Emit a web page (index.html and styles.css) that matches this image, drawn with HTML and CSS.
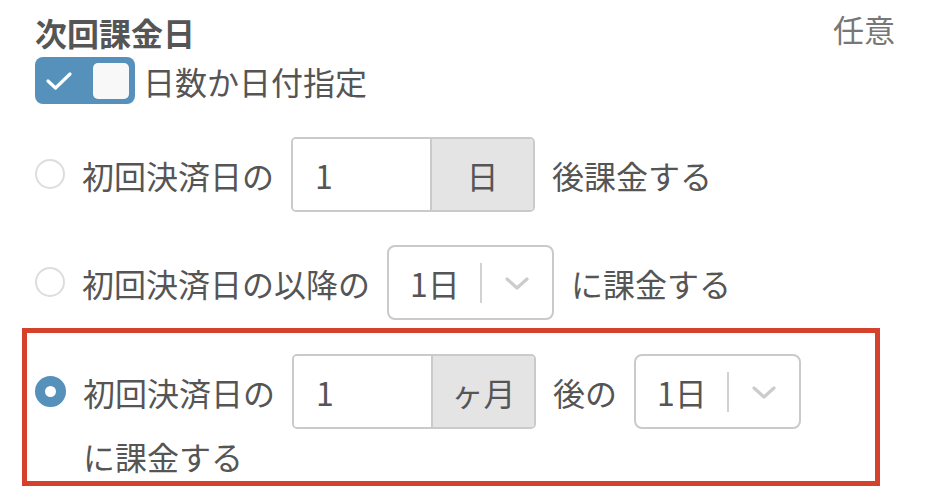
FILE: index.html
```html
<!DOCTYPE html>
<html lang="ja">
<head>
<meta charset="utf-8">
<title>次回課金日</title>
<link rel="stylesheet" href="styles.css">
</head>
<body>
<div class="panel">
  <div class="header">
    <h2 class="title">次回課金日</h2>
    <span class="optional">任意</span>
  </div>
  <div class="switch-row">
    <span class="switch">
      <svg class="switch-check" width="26" height="18" viewBox="0 0 26 18"><polyline points="2,9 9.5,16 24,2" fill="none" stroke="#fff" stroke-width="3.2" stroke-linecap="round" stroke-linejoin="round"/></svg>
      <span class="switch-knob"></span>
    </span>
    <span class="switch-label">日数か日付指定</span>
  </div>
  <div class="options">
    <div class="option">
      <span class="radio"></span>
      <div class="option-body">
        <span class="txt">初回決済日の</span>
        <div class="input-group"><span class="input-value">1</span><span class="input-addon">日</span></div>
        <span class="txt">後課金する</span>
      </div>
    </div>
    <div class="option">
      <span class="radio"></span>
      <div class="option-body">
        <span class="txt">初回決済日の以降の</span>
        <div class="select"><span class="select-value">1日</span><span class="select-sep"></span><span class="select-arrow"><svg width="24" height="14" viewBox="0 0 24 14"><polyline points="2,2 12,11 22,2" fill="none" stroke="#cccccc" stroke-width="3.2" stroke-linecap="round" stroke-linejoin="round"/></svg></span></div>
        <span class="txt">に課金する</span>
      </div>
    </div>
    <div class="option option--selected">
      <span class="radio radio--checked"></span>
      <div class="option-body">
        <span class="txt">初回決済日の</span>
        <div class="input-group"><span class="input-value">1</span><span class="input-addon">ヶ月</span></div>
        <span class="txt">後の</span>
        <div class="select"><span class="select-value">1日</span><span class="select-sep"></span><span class="select-arrow"><svg width="24" height="14" viewBox="0 0 24 14"><polyline points="2,2 12,11 22,2" fill="none" stroke="#cccccc" stroke-width="3.2" stroke-linecap="round" stroke-linejoin="round"/></svg></span></div>
        <span class="txt">に課金する</span>
      </div>
    </div>
  </div>
</div>
</body>
</html>
```

FILE: styles.css
```css
* { box-sizing: border-box; }

html, body {
  margin: 0;
  padding: 0;
  background: #ffffff;
}

body {
  font-family: "Noto Sans CJK JP", "Noto Sans", sans-serif;
  color: #555555;
  font-size: 32px;
}

.panel {
  padding: 12px 53px 0 35px;
}

.header {
  display: flex;
  justify-content: space-between;
  align-items: flex-start;
}

.title {
  margin: 0;
  font-size: 32px;
  font-weight: 700;
  line-height: 40px;
  color: #555555;
}

.optional {
  font-size: 31px;
  line-height: 34px;
  color: #777777;
}

.switch-row {
  display: flex;
  align-items: center;
  gap: 8px;
  margin-top: 5px;
}

.switch {
  position: relative;
  display: block;
  width: 100px;
  height: 47px;
  border-radius: 8px;
  background: #5591ba;
  flex: 0 0 auto;
}

.switch-check {
  position: absolute;
  left: 11px;
  top: 15px;
}

.switch-knob {
  position: absolute;
  right: 6px;
  top: 6px;
  width: 36px;
  height: 36px;
  border-radius: 5px;
  background: #f8f8f8;
}

.switch-label {
  line-height: 46px;
  white-space: nowrap;
}

.options {
  display: flex;
  flex-direction: column;
  margin-top: 33px;
}

.option {
  display: flex;
  align-items: flex-start;
  gap: 17px;
}

.option + .option {
  margin-top: 33px;
}

.option + .option--selected {
  margin-top: 8px;
}

.option--selected {
  margin: 0 15px 0 -13px;
  border: 5px solid #d5412b;
  padding: 21px 8px 2px 8px;
}

.radio {
  flex: 0 0 auto;
  width: 30px;
  height: 30px;
  margin-top: 22px;
  border-radius: 50%;
  border: 2px solid #dddddd;
  background: #ffffff;
}

.radio--checked {
  width: 31px;
  height: 31px;
  border: 10px solid #5591ba;
}

.option-body {
  flex: 1 1 auto;
  display: flex;
  flex-wrap: wrap;
  align-items: center;
  column-gap: 17px;
  row-gap: 4px;
}

.txt {
  line-height: 46px;
  white-space: nowrap;
}

.input-group {
  display: flex;
  width: 244px;
  height: 75px;
  border: 2px solid #cacaca;
  border-radius: 5px;
  overflow: hidden;
}

.input-value {
  flex: 0 0 137px;
  display: flex;
  align-items: center;
  padding-left: 22px;
  background: #ffffff;
}

.input-addon {
  flex: 1 1 auto;
  display: flex;
  align-items: center;
  justify-content: center;
  background: #e4e4e4;
  border-left: 2px solid #cacaca;
}

.select {
  display: flex;
  align-items: center;
  width: 167px;
  height: 75px;
  border: 2px solid #cacaca;
  border-radius: 8px;
  background: #ffffff;
}

.select-value {
  flex: 0 0 91px;
  padding-left: 21px;
  white-space: nowrap;
}

.select-sep {
  flex: 0 0 2px;
  height: 40px;
  background: #d2d2d2;
}

.select-arrow {
  flex: 1 1 auto;
  display: flex;
  align-items: center;
  justify-content: center;
  padding-top: 2px;
}

.select-arrow svg {
  display: block;
}
```
